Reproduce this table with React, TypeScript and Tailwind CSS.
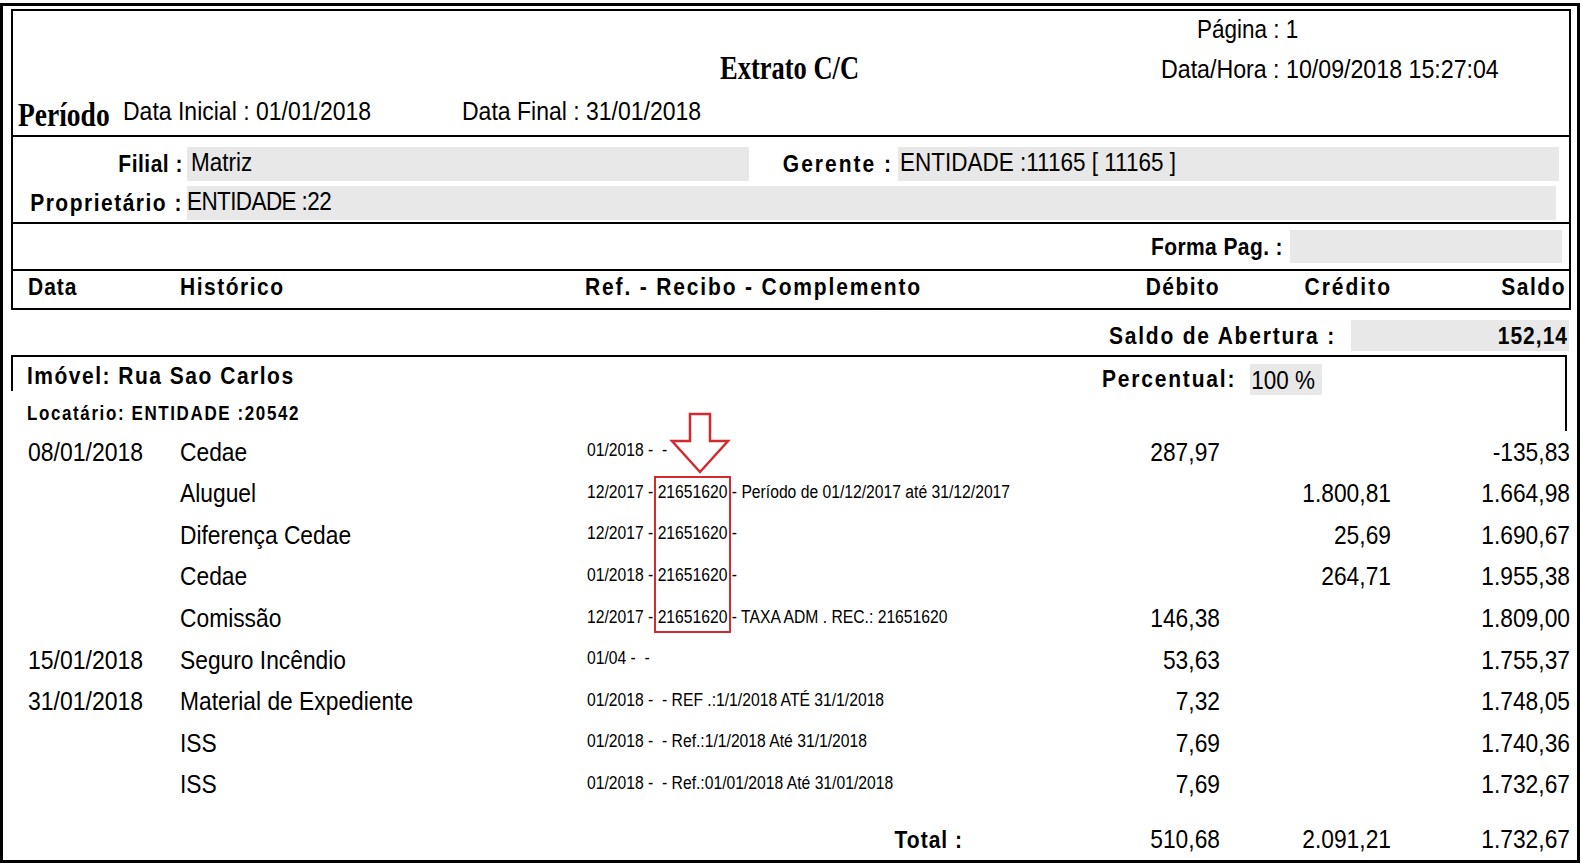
import React from "react";

function T({ c = "", children }: { c?: string; children: React.ReactNode }) {
  return <span className={`inline-block scale-y-[1.15] whitespace-pre ${c}`}>{children}</span>;
}

type Row = { d?: string; h: string; r: string; deb?: string; cred?: string; saldo: string };

const rows: Row[] = [
  { d: "08/01/2018", h: "Cedae", r: "01/2018 -  -", deb: "287,97", saldo: "-135,83" },
  { h: "Aluguel", r: "12/2017 - 21651620 - Período de 01/12/2017 até 31/12/2017", cred: "1.800,81", saldo: "1.664,98" },
  { h: "Diferença Cedae", r: "12/2017 - 21651620 -", cred: "25,69", saldo: "1.690,67" },
  { h: "Cedae", r: "01/2018 - 21651620 -", cred: "264,71", saldo: "1.955,38" },
  { h: "Comissão", r: "12/2017 - 21651620 - TAXA ADM . REC.: 21651620", deb: "146,38", saldo: "1.809,00" },
  { d: "15/01/2018", h: "Seguro Incêndio", r: "01/04 -  -", deb: "53,63", saldo: "1.755,37" },
  { d: "31/01/2018", h: "Material de Expediente", r: "01/2018 -  - REF .:1/1/2018 ATÉ 31/1/2018", deb: "7,32", saldo: "1.748,05" },
  { h: "ISS", r: "01/2018 -  - Ref.:1/1/2018 Até 31/1/2018", deb: "7,69", saldo: "1.740,36" },
  { h: "ISS", r: "01/2018 -  - Ref.:01/01/2018 Até 31/01/2018", deb: "7,69", saldo: "1.732,67" },
];

export default function App() {
  return (
    <div className="relative w-[1581px] h-[865px] overflow-hidden bg-white text-black font-['Liberation_Sans',Arial,sans-serif]">
      <div className="mt-[3px] h-[860px] w-[1580px] border-[3px] border-black">
        <div className="ml-[8px] mt-[3px] w-[1560px] flex flex-col">
          {/* Header box */}
          <div className="h-[126px] border-2 border-b-0 border-black flex flex-col">
            <div className="h-[38px] flex items-center pl-[1184px]">
              <T c="text-[22.5px]">Página : 1</T>
            </div>
            <div className="h-[40px] flex items-center pl-[707px]">
              <div className="w-[441px]">
                <span className="inline-block scale-y-[1.25] font-['Liberation_Serif',serif] font-bold text-[26.5px]">Extrato C/C</span>
              </div>
              <T c="text-[23.2px]">Data/Hora : 10/09/2018 15:27:04</T>
            </div>
            <div className="h-[46px] flex items-center pl-[5px]">
              <div className="w-[105px] pt-[5px]">
                <span className="inline-block scale-y-[1.2] font-['Liberation_Serif',serif] font-bold text-[27.5px]">Período</span>
              </div>
              <div className="w-[339px] pb-[1px]">
                <T c="text-[23px]">Data Inicial : 01/01/2018</T>
              </div>
              <div className="pb-[1px]">
                <T c="text-[23px]">Data Final : 31/01/2018</T>
              </div>
            </div>
          </div>

          {/* Filial box */}
          <div className="h-[89px] border-2 border-black pt-[10px] flex flex-col gap-[5px]">
            <div className="h-[34px] flex">
              <div className="w-[174px] pr-[4px] flex items-center justify-end">
                <T c="text-[21px] font-bold tracking-[0.5px]">Filial :</T>
              </div>
              <div className="w-[562px] bg-[#e8e8e8] pl-[4px] flex items-start">
                <T c="text-[22.5px] -mt-[1px]">Matriz</T>
              </div>
              <div className="w-[149px] pr-[5px] flex items-center justify-end">
                <T c="text-[21px] font-bold tracking-[2px]">Gerente :</T>
              </div>
              <div className="w-[661px] bg-[#e8e8e8] pl-[2px] flex items-start">
                <T c="text-[22.5px] -mt-[1px]">ENTIDADE :11165 [ 11165 ]</T>
              </div>
            </div>
            <div className="h-[34px] flex">
              <div className="w-[174px] pr-[4px] flex items-center justify-end">
                <T c="text-[21px] font-bold tracking-[1.5px]">Proprietário :</T>
              </div>
              <div className="w-[1369px] bg-[#e8e8e8] flex items-start">
                <T c="text-[22.5px] tracking-[-0.6px] -mt-[1px]">ENTIDADE :22</T>
              </div>
            </div>
          </div>

          {/* Forma Pag */}
          <div className="h-[45px] border-x-2 border-black flex items-center justify-end pr-[7px]">
            <div className="pr-[7px]">
              <T c="text-[21px] font-bold tracking-[0.4px]">Forma Pag. :</T>
            </div>
            <div className="w-[272px] h-[33px] bg-[#e8e8e8]" />
          </div>

          {/* Column header */}
          <div className="h-[41px] border-2 border-black flex items-center pl-[15px] pb-[5px]">
            <div className="w-[152px]"><T c="text-[21px] font-bold tracking-[1px]">Data</T></div>
            <div className="w-[405px]"><T c="text-[21px] font-bold tracking-[1.5px]">Histórico</T></div>
            <div className="w-[515px]"><T c="text-[21px] font-bold tracking-[1.85px]">Ref. - Recibo - Complemento</T></div>
            <div className="w-[120px] text-right"><T c="text-[21px] font-bold tracking-[1.5px]">Débito</T></div>
            <div className="w-[172px] text-right"><T c="text-[21px] font-bold tracking-[2px]">Crédito</T></div>
            <div className="w-[174px] text-right"><T c="text-[21px] font-bold tracking-[1.5px]">Saldo</T></div>
          </div>

          {/* Saldo de abertura */}
          <div className="h-[45px] flex items-start justify-end pt-[10px] pr-[2px]">
            <div className="h-[31px] flex items-center pr-[15px]">
              <T c="text-[21px] font-bold tracking-[1.8px]">Saldo de Abertura :</T>
            </div>
            <div className="w-[218px] h-[31px] bg-[#e8e8e8] flex items-center justify-end pr-[1px]">
              <T c="text-[21px] font-bold tracking-[1px]">152,14</T>
            </div>
          </div>

          {/* Imóvel block */}
          <div className="h-[36px] border-t-2 border-x-2 border-black mr-[4px] flex items-start pl-[14px] pt-[4px]">
            <div className="w-[1075px] h-[30px] flex items-center">
              <T c="text-[21px] font-bold tracking-[1.5px]">Imóvel: Rua Sao Carlos</T>
            </div>
            <div className="h-[36px] flex items-center pr-[14px]">
              <T c="text-[21px] font-bold tracking-[1.8px]">Percentual:</T>
            </div>
            <div className="w-[72px] h-[31px] mt-[3px] bg-[#e8e8e8] flex items-start pl-[1px]">
              <T c="text-[22.5px]">100 %</T>
            </div>
          </div>
          <div className="h-[40px] border-r-2 border-black mr-[4px] flex items-center pl-[16px] pt-[6px]">
            <T c="text-[17px] font-bold tracking-[1.6px]">Locatário: ENTIDADE :20542</T>
          </div>

          {/* Data rows */}
          <div className="flex flex-col">
            {rows.map((row, i) => (
              <div key={i} className="h-[41.6px] flex items-center pl-[17px]">
                <div className="w-[152px]"><T c="text-[23px]">{row.d ?? ""}</T></div>
                <div className="w-[407px]"><T c="text-[22.8px]">{row.h}</T></div>
                <div className="w-[513px] pb-[3px]"><T c="text-[15.7px]">{row.r}</T></div>
                <div className="w-[120px] text-right"><T c="text-[22.8px]">{row.deb ?? ""}</T></div>
                <div className="w-[171px] text-right"><T c="text-[22.8px]">{row.cred ?? ""}</T></div>
                <div className="w-[179px] text-right"><T c="text-[22.8px]">{row.saldo}</T></div>
              </div>
            ))}
          </div>

          {/* Total */}
          <div className="h-[40px] mt-[14px] flex items-center pl-[17px]">
            <div className="w-[935px] text-right"><T c="text-[21px] font-bold tracking-[1px]">Total :</T></div>
            <div className="w-[257px] text-right"><T c="text-[22.8px]">510,68</T></div>
            <div className="w-[171px] text-right"><T c="text-[22.8px]">2.091,21</T></div>
            <div className="w-[179px] text-right"><T c="text-[22.8px]">1.732,67</T></div>
          </div>
        </div>
      </div>

      {/* Red highlight box */}
      <div className="absolute left-[654px] top-[476px] w-[77px] h-[157px] border-2 border-[#d42a2f]" />
      {/* Red arrow */}
      <svg className="absolute left-[665px] top-[412px]" width="70" height="64" viewBox="0 0 70 64">
        <polygon points="25,2 45,2 45,29 63,29 35,60 7,29 25,29" fill="white" stroke="#d42a2f" strokeWidth="2.5" strokeLinejoin="miter" />
      </svg>
    </div>
  );
}
